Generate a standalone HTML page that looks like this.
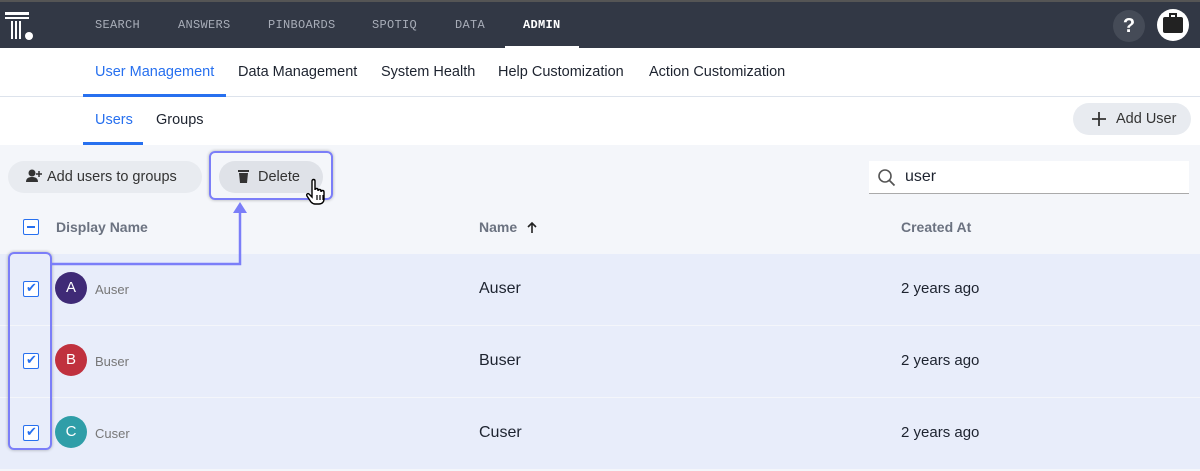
<!DOCTYPE html>
<html><head><style>
*{box-sizing:border-box;margin:0;padding:0}
body{width:1200px;height:471px;overflow:hidden;background:#f4f6fa;font-family:"Liberation Sans",sans-serif;position:relative}
.a{position:absolute}
.hdr{left:0;top:0;width:1200px;height:48px;background:#323845;border-top:2px solid #555}
.nav{top:18px;font-family:"Liberation Mono",monospace;font-size:12px;color:#a8adb8;letter-spacing:0.3px}
.sub{top:48px;left:0;width:1200px;height:49px;background:#fff;border-bottom:1px solid #dde3ec}
.tabs{top:97px;left:0;width:1200px;height:48px;background:#fff}
.t{font-size:14.5px;color:#1d232f}
.btn{background:#e8ebf0;border-radius:16px;height:32px;font-size:14.5px;color:#333;line-height:32px}
.row{left:0;width:1200px;height:71px;background:#e8edfa}
.cb{width:16px;height:16px;border:1.5px solid #2770ef;border-radius:2px;background:#fff}
.av{width:32px;height:32px;border-radius:50%;color:#fff;font-size:15px;text-align:center;line-height:32px}
.dn{font-size:13px;color:#777}
.nm{font-size:16px;color:#1d232f}
.ca{font-size:15px;color:#1d232f}
.hl{border:2px solid #7b7ef8;border-radius:6px;box-shadow:0 0 3px rgba(0,0,0,.3)}
</style></head><body>
<div class="a hdr"></div>
<svg class="a" style="left:5px;top:12px" width="30" height="30"><rect x="0" y="0" width="24" height="3" fill="#fff"/><rect x="0" y="5" width="24" height="2" fill="#fff"/><rect x="6" y="9" width="2" height="18" fill="#fff"/><rect x="10" y="9" width="2" height="18" fill="#fff"/><rect x="14" y="9" width="2" height="18" fill="#fff"/><circle cx="24" cy="24" r="4" fill="#fff"/></svg>
<div class="a nav" style="left:95px">SEARCH</div>
<div class="a nav" style="left:178px">ANSWERS</div>
<div class="a nav" style="left:268px">PINBOARDS</div>
<div class="a nav" style="left:372px">SPOTIQ</div>
<div class="a nav" style="left:455px">DATA</div>
<div class="a nav" style="left:523px;color:#fff;font-weight:bold">ADMIN</div>
<div class="a" style="left:505px;top:46px;width:74px;height:3px;background:#fff"></div>
<div class="a" style="left:1113px;top:10px;width:32px;height:32px;border-radius:50%;background:#454b57;color:#fff;font-size:20px;text-align:center;line-height:32px;font-weight:bold">?</div>
<div class="a" style="left:1157px;top:9px;width:32px;height:32px;border-radius:50%;background:#fff"></div>
<div class="a" style="left:1163px;top:17px;width:20px;height:16px;background:#222;border-radius:2px"></div>
<div class="a" style="left:1169px;top:13px;width:8px;height:5px;border:2px solid #222;border-bottom:none"></div>
<div class="a sub"></div>
<div class="a t" style="left:95px;top:64px;color:#2770ef">User Management</div>
<div class="a" style="left:83px;top:94px;width:143px;height:3px;background:#2770ef"></div>
<div class="a t" style="left:238px;top:64px">Data Management</div>
<div class="a t" style="left:381px;top:64px">System Health</div>
<div class="a t" style="left:498px;top:64px">Help Customization</div>
<div class="a t" style="left:649px;top:64px">Action Customization</div>
<div class="a tabs"></div>
<div class="a t" style="left:95px;top:112px;color:#2770ef">Users</div>
<div class="a" style="left:83px;top:142px;width:60px;height:3px;background:#2770ef"></div>
<div class="a t" style="left:156px;top:112px">Groups</div>
<div class="a btn" style="left:1073px;top:103px;width:118px;padding-left:43px">Add User</div>
<svg class="a" style="left:1092px;top:112px" width="14" height="14"><path d="M7 0v14M0 7h14" stroke="#333" stroke-width="1.8"/></svg>
<div class="a btn" style="left:8px;top:161px;width:194px;padding-left:39px">Add users to groups</div>
<svg class="a" style="left:25px;top:168px" width="18" height="16"><circle cx="7" cy="5" r="3.5" fill="#333"/><path d="M1 14c0-4 3-5 6-5s6 1 6 5z" fill="#333"/><path d="M14 3v6M11 6h6" stroke="#333" stroke-width="1.5"/></svg>
<div class="a btn" style="left:219px;top:161px;width:104px;padding-left:39px;background:#dfe2e8">Delete</div>
<svg class="a" style="left:238px;top:169px" width="12" height="15"><rect x="0" y="1" width="11" height="2" fill="#333"/><path d="M1 4h9l-1 10H2z" fill="#333"/></svg>
<div class="a hl" style="left:209px;top:151px;width:124px;height:49px"></div>
<svg class="a" style="left:306px;top:178px" width="26" height="28"><path d="M6 3c0-2 3-2 3 0v9c0-2 3-2 3 0v1c0-2 3-2 3 0v1c0-2 3-2 3 0v7c0 3-2 5-5 5h-4c-2 0-3-1-4-2l-4-6c-1-2 1-3 2-2l3 3z" fill="#fff" stroke="#000" stroke-width="1.4"/><path d="M11 17v5M14 17v5M17 17v5" stroke="#000" stroke-width="1.2"/></svg>
<div class="a" style="left:869px;top:161px;width:320px;height:33px;background:#fff;border-bottom:1px solid #aaa"></div>
<svg class="a" style="left:877px;top:168px" width="20" height="20"><circle cx="8" cy="8" r="6" fill="none" stroke="#555" stroke-width="1.6"/><path d="M12.5 12.5l5 5" stroke="#555" stroke-width="1.8"/></svg>
<div class="a" style="left:905px;top:168px;font-size:16px;color:#1d232f">user</div>
<div class="a cb" style="left:23px;top:219px"></div>
<div class="a" style="left:27px;top:226px;width:8px;height:2px;background:#2770ef"></div>
<div class="a" style="left:56px;top:219px;font-size:14px;font-weight:bold;color:#6b7280">Display Name</div>
<div class="a" style="left:479px;top:219px;font-size:14px;font-weight:bold;color:#6b7280">Name</div>
<svg class="a" style="left:527px;top:221px" width="10" height="12"><path d="M5 12V2M1 6l4-4 4 4" fill="none" stroke="#222" stroke-width="1.6"/></svg>
<div class="a" style="left:901px;top:219px;font-size:14px;font-weight:bold;color:#6b7280">Created At</div>
<div class="a row" style="top:254px"></div>
<div class="a row" style="top:326px"></div>
<div class="a row" style="top:398px"></div>
<div class="a" style="left:0;top:325px;width:1200px;height:1px;background:#f4f6fa"></div>
<div class="a" style="left:0;top:397px;width:1200px;height:1px;background:#f4f6fa"></div>
<div class="a" style="left:0;top:469px;width:1200px;height:2px;background:#f4f6fa"></div>

<div class="a cb" style="left:23px;top:281px"></div><div class="a" style="left:26px;top:280px;color:#2770ef;font-size:13px">✔</div>
<div class="a av" style="left:55px;top:272px;background:#3f2a76">A</div>
<div class="a dn" style="left:95px;top:282px">Auser</div>
<div class="a nm" style="left:479px;top:280px">Auser</div>
<div class="a ca" style="left:901px;top:280px">2 years ago</div>

<div class="a cb" style="left:23px;top:353px"></div><div class="a" style="left:26px;top:352px;color:#2770ef;font-size:13px">✔</div>
<div class="a av" style="left:55px;top:344px;background:#c0313e">B</div>
<div class="a dn" style="left:95px;top:354px">Buser</div>
<div class="a nm" style="left:479px;top:352px">Buser</div>
<div class="a ca" style="left:901px;top:352px">2 years ago</div>

<div class="a cb" style="left:23px;top:425px"></div><div class="a" style="left:26px;top:424px;color:#2770ef;font-size:13px">✔</div>
<div class="a av" style="left:55px;top:416px;background:#2f9ea8">C</div>
<div class="a dn" style="left:95px;top:426px">Cuser</div>
<div class="a nm" style="left:479px;top:424px">Cuser</div>
<div class="a ca" style="left:901px;top:424px">2 years ago</div>

<div class="a hl" style="left:8px;top:252px;width:44px;height:198px"></div>
<svg class="a" style="left:0;top:0" width="400" height="300"><path d="M51 264H240V212" fill="none" stroke="#7b7ef8" stroke-width="2.5"/><path d="M233 213l7-11 7 11z" fill="#7b7ef8"/></svg>
</body></html>
